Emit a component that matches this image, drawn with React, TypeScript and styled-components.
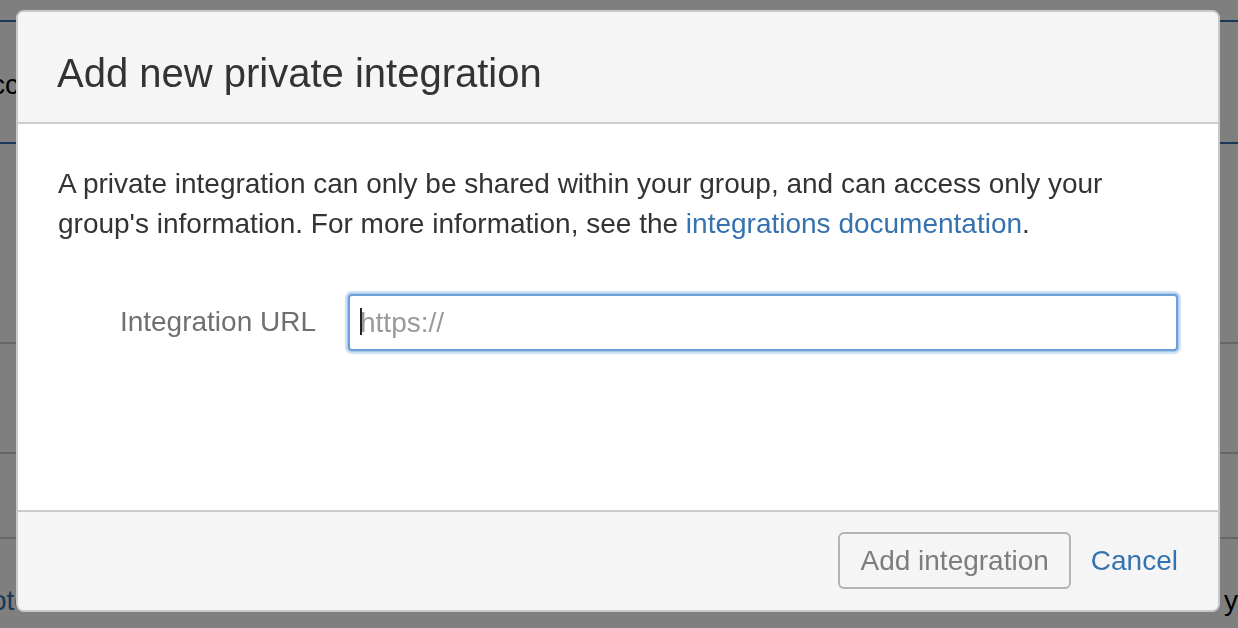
import React from "react";
import styled, { createGlobalStyle } from "styled-components";

const Global = createGlobalStyle`
  html, body { margin: 0; padding: 0; }
  body {
    width: 1238px;
    height: 628px;
    overflow: hidden;
    font-family: "Liberation Sans", Arial, Helvetica, sans-serif;
    background: #ffffff;
  }
  * { box-sizing: border-box; }
`;

/* ---------- underlying page (behind the overlay) ---------- */
const Page = styled.div`
  position: relative;
  width: 1238px;
  height: 628px;
  overflow: hidden;
  padding-top: 20px;
  font-size: 28px;
  color: #000;
`;

const TableHead = styled.div`
  height: 124px;
  border-top: 2px solid #3572b0;
  border-bottom: 2px solid #3572b0;
  display: flex;
  align-items: center;
  padding-top: 6px;
`;

const CutText = styled.span<{ $color?: string }>`
  margin-left: -9px;
  color: ${(p) => p.$color || "#000"};
  white-space: nowrap;
`;

const TableRow = styled.div<{ $h: number }>`
  height: ${(p) => p.$h}px;
  border-bottom: 2px solid #cccccc;
`;

const BottomLine = styled.div`
  display: flex;
  justify-content: space-between;
  align-items: flex-end;
  height: 80px;
  line-height: 32px;
  padding-bottom: 2px;
`;

const RightText = styled.span`
  margin-right: 0px;
`;

const Overlay = styled.div`
  position: fixed;
  inset: 0;
  background: rgba(0, 0, 0, 0.5);
`;

/* ---------- dialog ---------- */
const Dialog = styled.section`
  position: fixed;
  left: 16px;
  top: 10px;
  width: 1204px;
  height: 602px;
  border: 2px solid #c9c9c9;
  border-radius: 8px;
  background: #ffffff;
  overflow: hidden;
  display: flex;
  flex-direction: column;
`;

const Header = styled.header`
  height: 112px;
  flex: none;
  background: #f5f5f5;
  border-bottom: 2px solid #cccccc;
  padding: 31px 40px 0 39px;
`;

const Title = styled.h2`
  margin: 0;
  font-size: 40px;
  line-height: 60px;
  font-weight: normal;
  color: #333333;
`;

const Content = styled.div`
  flex: 1;
  padding: 40px 40px 0 40px;
`;

const Para = styled.p`
  margin: 0;
  font-size: 28px;
  line-height: 40px;
  color: #333333;
`;

const Link = styled.a`
  color: #3572b0;
  text-decoration: none;
`;

const FieldRow = styled.div`
  display: grid;
  grid-template-columns: 258px 1fr;
  column-gap: 32px;
  align-items: center;
  margin-top: 50px;
`;

const Label = styled.label`
  text-align: right;
  font-size: 28px;
  line-height: 40px;
  color: #707070;
  padding-bottom: 2px;
`;

const InputWrap = styled.div`
  position: relative;
`;

const TextInput = styled.input`
  display: block;
  width: 100%;
  height: 57px;
  border: 2px solid #6d9fd8;
  border-radius: 4px;
  box-shadow: 0 0 0 1px #a9c8ec, 0 0 1px 3px #cde0f5;
  padding: 0 10px;
  font-family: "Liberation Sans", Arial, Helvetica, sans-serif;
  font-size: 28px;
  color: #333;
  background: #fff;
  outline: none;
  &::placeholder {
    color: #9a9a9a;
  }
`;

const Caret = styled.span`
  position: absolute;
  left: 12px;
  top: 14px;
  width: 2px;
  height: 27px;
  background: #222;
`;

const Footer = styled.footer`
  height: 100px;
  flex: none;
  background: #f5f5f5;
  border-top: 2px solid #cccccc;
  display: flex;
  justify-content: flex-end;
  align-items: center;
  gap: 20px;
  padding: 0 40px 2px 40px;
`;

const Button = styled.button`
  height: 57px;
  padding: 2px 20px 0 20px;
  border: 2px solid #b3b3b3;
  border-radius: 6px;
  background: #f5f5f5;
  font-family: "Liberation Sans", Arial, Helvetica, sans-serif;
  font-size: 28px;
  color: #7d7d7d;
  cursor: default;
`;

const CancelLink = styled.a`
  font-size: 28px;
  color: #3572b0;
  text-decoration: none;
  padding-top: 2px;
`;

export default function App() {
  return (
    <>
      <Global />
      <Page>
        <TableHead>
          <CutText>ccess</CutText>
        </TableHead>
        <TableRow $h={200} />
        <TableRow $h={110} />
        <TableRow $h={85} />
        <BottomLine>
          <CutText $color="#3572b0">oto</CutText>
          <RightText>y</RightText>
        </BottomLine>
      </Page>
      <Overlay />
      <Dialog role="dialog" aria-labelledby="dlg-title">
        <Header>
          <Title id="dlg-title">Add new private integration</Title>
        </Header>
        <Content>
          <Para>
            A private integration can only be shared within your group, and can access only your
            group's information. For more information, see the{" "}
            <Link href="#">integrations documentation</Link>.
          </Para>
          <FieldRow>
            <Label htmlFor="url">Integration URL</Label>
            <InputWrap>
              <TextInput id="url" placeholder="https://" />
              <Caret />
            </InputWrap>
          </FieldRow>
        </Content>
        <Footer>
          <Button type="button">Add integration</Button>
          <CancelLink href="#">Cancel</CancelLink>
        </Footer>
      </Dialog>
    </>
  );
}
